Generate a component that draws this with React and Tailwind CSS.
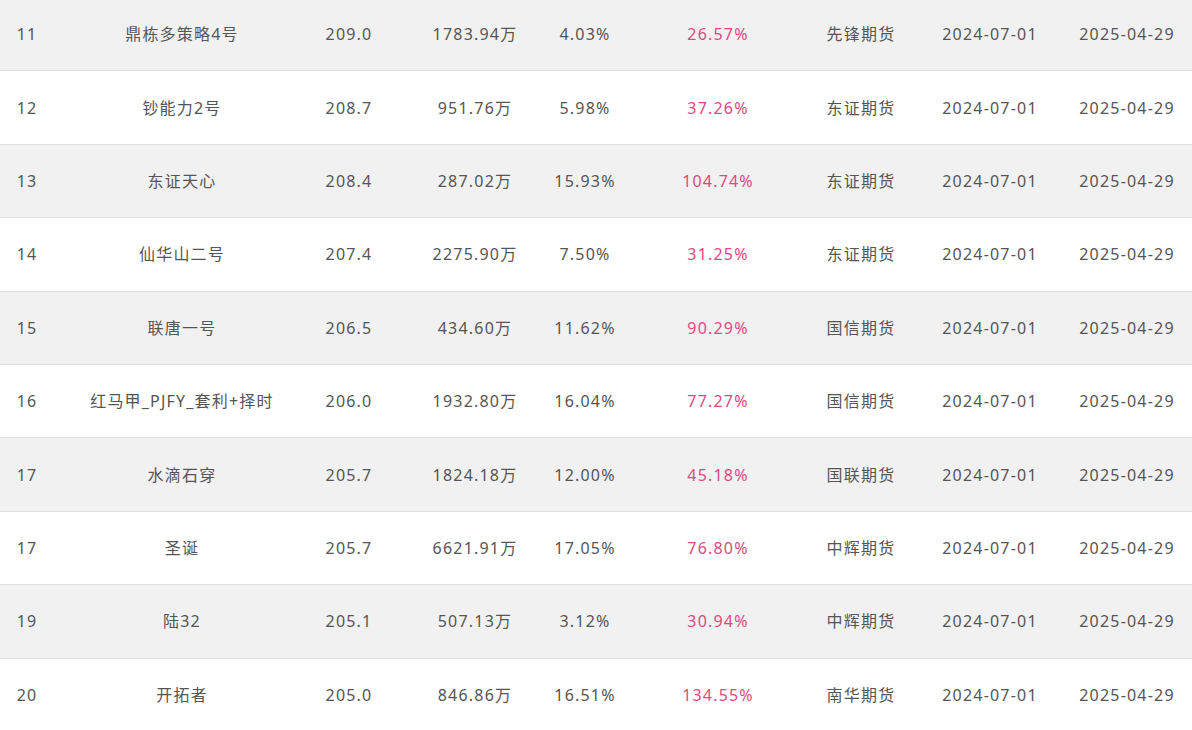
import React from "react";

const rows = [
    ["11", "鼎栋多策略4号", "209.0", "1783.94万", "4.03%", "26.57%", "先锋期货"],
    ["12", "钞能力2号", "208.7", "951.76万", "5.98%", "37.26%", "东证期货"],
    ["13", "东证天心", "208.4", "287.02万", "15.93%", "104.74%", "东证期货"],
    ["14", "仙华山二号", "207.4", "2275.90万", "7.50%", "31.25%", "东证期货"],
    ["15", "联唐一号", "206.5", "434.60万", "11.62%", "90.29%", "国信期货"],
    ["16", "红马甲_PJFY_套利+择时", "206.0", "1932.80万", "16.04%", "77.27%", "国信期货"],
    ["17", "水滴石穿", "205.7", "1824.18万", "12.00%", "45.18%", "国联期货"],
    ["17", "圣诞", "205.7", "6621.91万", "17.05%", "76.80%", "中辉期货"],
    ["19", "陆32", "205.1", "507.13万", "3.12%", "30.94%", "中辉期货"],
    ["20", "开拓者", "205.0", "846.86万", "16.51%", "134.55%", "南华期货"],
];

const Cell = ({ children, className = "" }) => (
    <div className={`flex items-center justify-center whitespace-nowrap ${className}`}>
        {children}
    </div>
);

const App = () => {
    return (
        <div
            className="w-[1192px] h-[730px] overflow-hidden bg-white text-[16px] tracking-[1.2px] text-[#555]"
            style={{ fontFamily: '"Noto Sans", "Noto Sans CJK SC", sans-serif' }}
        >
            <div className="-mt-[2px]">
                {rows.map((r, i) => (
                    <div
                        key={i}
                        className={`grid grid-cols-[54px_256px_78px_174px_46px_220px_66px_192px_82px] h-[73.4px] border-b border-[#e0e0e0] ${
                            i % 2 === 0 ? "bg-[#f1f1f1]" : "bg-white"
                        }`}
                    >
                        <Cell>{r[0]}</Cell>
                        <Cell>{r[1]}</Cell>
                        <Cell>{r[2]}</Cell>
                        <Cell>{r[3]}</Cell>
                        <Cell>{r[4]}</Cell>
                        <Cell className="text-[#e0487f]">{r[5]}</Cell>
                        <Cell>{r[6]}</Cell>
                        <Cell>2024-07-01</Cell>
                        <Cell>2025-04-29</Cell>
                    </div>
                ))}
            </div>
        </div>
    );
};

export default App;
